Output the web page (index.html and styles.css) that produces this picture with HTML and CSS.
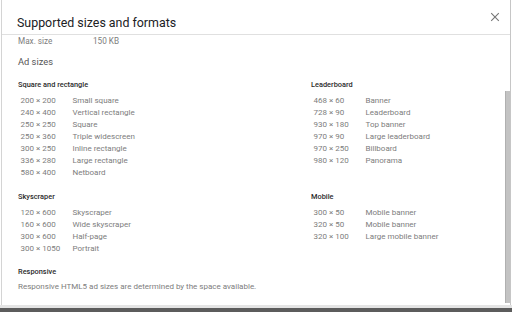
FILE: index.html
```html
<!DOCTYPE html>
<html lang="en">
<head>
<meta charset="utf-8">
<title>Supported sizes and formats</title>
<link rel="stylesheet" href="styles.css">
</head>
<body>
<div class="page">
  <div class="dialog">
    <header class="dlg-head">
      <h1 class="dlg-title">Supported sizes and formats</h1>
      <button class="close" aria-label="Close">
        <svg width="10" height="10" viewBox="0 0 10 10"><path d="M1.2 1.2L8.8 8.8M8.8 1.2L1.2 8.8" stroke="#767676" stroke-width="1.1" fill="none"/></svg>
      </button>
    </header>
    <div class="dlg-body">
      <div class="content">
        <div class="kv"><span class="kv-key">Max. size</span><span>150 KB</span></div>
        <h2 class="sub">Ad sizes</h2>
        <div class="groups">
          <section class="group">
            <h3 class="ghead">Square and rectangle</h3>
            <ul class="rows">
              <li><span class="dim">200 × 200</span><span>Small square</span></li>
              <li><span class="dim">240 × 400</span><span>Vertical rectangle</span></li>
              <li><span class="dim">250 × 250</span><span>Square</span></li>
              <li><span class="dim">250 × 360</span><span>Triple widescreen</span></li>
              <li><span class="dim">300 × 250</span><span>Inline rectangle</span></li>
              <li><span class="dim">336 × 280</span><span>Large rectangle</span></li>
              <li><span class="dim">580 × 400</span><span>Netboard</span></li>
            </ul>
          </section>
          <section class="group">
            <h3 class="ghead">Leaderboard</h3>
            <ul class="rows">
              <li><span class="dim">468 × 60</span><span>Banner</span></li>
              <li><span class="dim">728 × 90</span><span>Leaderboard</span></li>
              <li><span class="dim">930 × 180</span><span>Top banner</span></li>
              <li><span class="dim">970 × 90</span><span>Large leaderboard</span></li>
              <li><span class="dim">970 × 250</span><span>Billboard</span></li>
              <li><span class="dim">980 × 120</span><span>Panorama</span></li>
            </ul>
          </section>
          <section class="group">
            <h3 class="ghead">Skyscraper</h3>
            <ul class="rows">
              <li><span class="dim">120 × 600</span><span>Skyscraper</span></li>
              <li><span class="dim">160 × 600</span><span>Wide skyscraper</span></li>
              <li><span class="dim">300 × 600</span><span>Half-page</span></li>
              <li><span class="dim">300 × 1050</span><span>Portrait</span></li>
            </ul>
          </section>
          <section class="group">
            <h3 class="ghead">Mobile</h3>
            <ul class="rows">
              <li><span class="dim">300 × 50</span><span>Mobile banner</span></li>
              <li><span class="dim">320 × 50</span><span>Mobile banner</span></li>
              <li><span class="dim">320 × 100</span><span>Large mobile banner</span></li>
            </ul>
          </section>
        </div>
        <section class="resp">
          <h3 class="ghead">Responsive</h3>
          <p class="resp-text">Responsive HTML5 ad sizes are determined by the space available.</p>
        </section>
      </div>
      <div class="scrollbar"><div class="thumb"></div></div>
    </div>
  </div>
  <div class="shade"></div>
</div>
</body>
</html>
```
FILE: styles.css
```css
* { box-sizing: border-box; }
html, body { margin: 0; padding: 0; background: #ffffff; }
body { font-family: Roboto, "Liberation Sans", sans-serif; }

.page { width: 512px; height: 312px; display: flex; flex-direction: column; overflow: hidden; }

.dialog {
  margin-left: 1px;
  width: 510px;
  height: 305px;
  background: #fff;
  border-left: 1px solid #d4d4d4;
  border-right: 1px solid #c6c6c6;
  display: flex;
  flex-direction: column;
}

.dlg-head {
  height: 35px;
  flex: none;
  display: flex;
  align-items: center;
  padding: 0 10px 0 15px;
  border-bottom: 1px solid #e0e0e0;
}
.dlg-title {
  margin: 0;
  padding-top: 11px;
  font-size: 12.4px;
  line-height: 16px;
  font-weight: 400;
  color: #202124;
}
.close {
  margin-left: auto;
  width: 10px;
  height: 10px;
  padding: 0;
  border: 0;
  background: none;
  display: flex;
}

.dlg-body { flex: 1; display: flex; min-height: 0; }
.content { flex: 1; padding-left: 16px; }

.kv { display: flex; font-size: 8.2px; line-height: 12px; color: #7d7d7d; }
.kv-key { width: 75px; }

.sub { margin: 8px 0 0; font-size: 9.3px; line-height: 14px; font-weight: 400; color: #555; }

.groups {
  margin-top: 10px;
  display: grid;
  grid-template-columns: 293px 1fr;
  row-gap: 12px;
}

.ghead { margin: 0; font-size: 7.4px; line-height: 12px; font-weight: 500; color: #2a2a2a; }

.rows { list-style: none; margin: 4px 0 0; padding: 0 0 0 2.5px; }
.rows li { display: flex; font-size: 8px; line-height: 12px; color: #7d7d7d; }
.dim { width: 52px; flex: none; }

.resp { margin-top: 11px; }
.resp-text { margin: 3px 0 0; font-size: 8px; line-height: 12px; color: #7d7d7d; }

.scrollbar { width: 5px; flex: none; padding-top: 56px; }
.thumb { height: 212px; background: #c3c3c3; border-left: 1px solid #b0b0b0; }

.shade { flex: 1; background: linear-gradient(#e4e4e4 0 3px, #5c5c5c 3px); }
```
